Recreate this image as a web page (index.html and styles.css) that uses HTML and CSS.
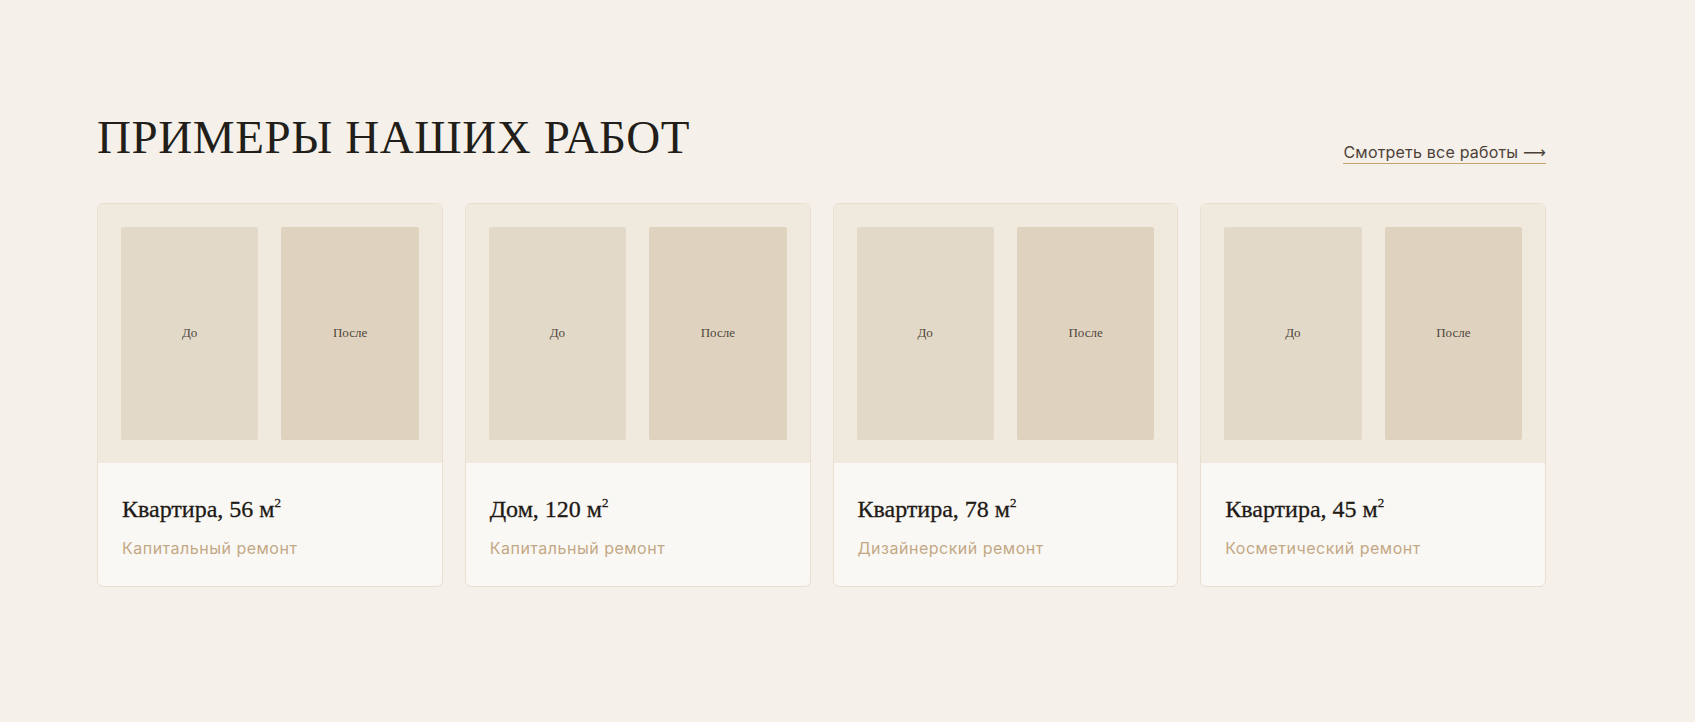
FILE: index.html
```
<!DOCTYPE html>
<html lang="ru">
<head>
    <meta charset="UTF-8">
    <meta name="viewport" content="width=device-width, initial-scale=1.0">
    <title>Примеры наших работ</title>
    <link rel="stylesheet" href="styles.css">
</head>
<body>
  <section class="works">
    <div class="works-head">
      <h2 class="works-title">ПРИМЕРЫ НАШИХ РАБОТ</h2>
      <a class="works-all" href="#">Смотреть все работы <span class="arrow">⟶</span></a>
    </div>
    <div class="works-grid">
      <div class="work-card">
        <div class="work-photos">
          <div class="photo before">До</div>
          <div class="photo after">После</div>
        </div>
        <div class="work-info">
          <h3>Квартира, 56 м<sup>2</sup></h3>
          <p>Капитальный ремонт</p>
        </div>
      </div>
      <div class="work-card">
        <div class="work-photos">
          <div class="photo before">До</div>
          <div class="photo after">После</div>
        </div>
        <div class="work-info">
          <h3>Дом, 120 м<sup>2</sup></h3>
          <p>Капитальный ремонт</p>
        </div>
      </div>
      <div class="work-card">
        <div class="work-photos">
          <div class="photo before">До</div>
          <div class="photo after">После</div>
        </div>
        <div class="work-info">
          <h3>Квартира, 78 м<sup>2</sup></h3>
          <p>Дизайнерский ремонт</p>
        </div>
      </div>
      <div class="work-card">
        <div class="work-photos">
          <div class="photo before">До</div>
          <div class="photo after">После</div>
        </div>
        <div class="work-info">
          <h3>Квартира, 45 м<sup>2</sup></h3>
          <p>Косметический ремонт</p>
        </div>
      </div>
    </div>
  </section>
</body>
</html>
```

FILE: styles.css
```
* {
  box-sizing: border-box;
}
body {
  margin: 0;
  background-color: #f5f0e9;
  font-family: "Inter", "Noto Sans", sans-serif;
  color: #2a2520;
}
.works {
  width: 1449px;
  margin-left: 97px;
  padding: 112px 0 160px;
}
.works-head {
  display: flex;
  justify-content: space-between;
  align-items: flex-end;
  margin-bottom: 39px;
}
.works-title {
  margin: 0;
  font-family: "Liberation Serif", serif;
  font-weight: 400;
  font-size: 47px;
  line-height: 1.1;
  letter-spacing: 0.6px;
  color: #221e1a;
}
.works-all {
  color: #4d4239;
  font-size: 16px;
  letter-spacing: 0.2px;
  text-decoration: none;
  border-bottom: 1px solid #c7a373;
  padding-bottom: 1px;
}
.works-all .arrow {
  font-family: "DejaVu Sans", sans-serif;
  letter-spacing: 0;
}
.works-grid {
  display: grid;
  grid-template-columns: repeat(4, 1fr);
  gap: 22px;
}
.work-card {
  border: 1px solid #e8dfcf;
  border-radius: 6px;
  overflow: hidden;
  background-color: #faf8f4;
}
.work-photos {
  display: flex;
  gap: 23px;
  padding: 23px;
  background-color: #f0e9de;
}
.photo {
  flex: 1;
  height: 213px;
  display: flex;
  align-items: center;
  justify-content: center;
  border-radius: 2px;
  font-family: "Liberation Serif", serif;
  font-size: 13px;
  color: #4f463d;
}
.before {
  background-color: #e2d9c8;
}
.after {
  background-color: #dfd3bf;
}
.work-info {
  padding: 31px 24px 27px;
}
.work-info h3 {
  margin: 0 0 12px;
  font-family: "Liberation Serif", serif;
  font-weight: 400;
  font-size: 24px;
  line-height: 1.3;
  color: #1e1a16;
  -webkit-text-stroke: 0.3px #1e1a16;
}
.work-info sup {
  font-size: 13px;
  line-height: 0;
  vertical-align: 10px;
}
.work-info p {
  margin: 0;
  font-size: 16px;
  letter-spacing: 0.5px;
  line-height: 1.4;
  color: #c3a886;
}
```
